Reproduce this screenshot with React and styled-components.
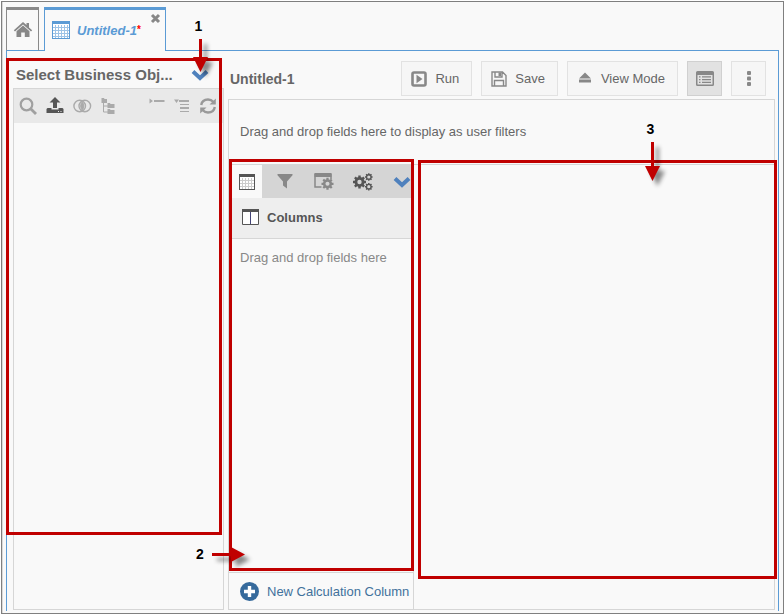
import React from "react";
import styled, { createGlobalStyle, css } from "styled-components";

const GlobalStyle = createGlobalStyle`
  * { box-sizing: border-box; }
  body {
    margin: 0;
    background: #fff;
    color: #666;
    font-family: "Liberation Sans", Arial, sans-serif;
    font-size: 13px;
  }
  button { font: inherit; color: inherit; cursor: pointer; }
`;

const RED = "#c00000";
const BLUE = "#5b9bd5";
const LINE = "#d6d6d6";

const Frame = styled.div`
  display: flex;
  flex-direction: column;
  min-height: calc(100vh - 1px);
  margin: 1px 0 0 1px;
  padding: 0 4px 2px 4px;
  border: 1px solid #7f7f7f;
  box-shadow: inset 1px 0 #d9d9d9;
  background: #f9f9f9;
`;

const TabBar = styled.nav`
  display: flex;
  align-items: stretch;
  height: 49px;
  padding-top: 5px;
`;

const TabSpacer = styled.div`
  flex: ${(p) => (p.$fill ? "1" : "0 0 5px")};
  border-bottom: 1px solid ${BLUE};
`;

const HomeTab = styled.button`
  display: flex;
  align-items: center;
  justify-content: center;
  width: 33px;
  padding: 0;
  border: 1px solid #8a8a8a;
  border-top: 3px solid #8a8a8a;
  border-bottom: 1px solid ${BLUE};
  background: transparent;
`;

const DocumentTab = styled.div`
  position: relative;
  display: flex;
  width: 122px;
  border: 1px solid ${BLUE};
  border-top-width: 3px;
  border-bottom: 0;
`;

const TabLabel = styled.button`
  display: flex;
  flex: 1;
  align-items: center;
  gap: 7px;
  padding: 0 0 1px 7px;
  border: 0;
  background: transparent;
  color: ${BLUE};
  font-weight: bold;
  font-style: italic;
  sup { color: #f00; font-size: 10px; font-style: normal; line-height: 0; vertical-align: 2px; }
`;

const CloseButton = styled.button`
  position: absolute;
  top: 3px;
  right: 4px;
  display: flex;
  padding: 0;
  border: 0;
  background: transparent;
`;

const Body = styled.main`
  display: flex;
  flex: 1;
  gap: 4px;
  padding: 0 3px 1px 6px;
  border: 1px solid ${BLUE};
  border-top: 0;
  border-bottom: 0;
`;

const Sidebar = styled.aside`
  position: relative;
  display: flex;
  flex-direction: column;
  flex: 0 0 211px;
`;

const SidebarHeader = styled.header`
  display: flex;
  align-items: center;
  gap: 12px;
  height: 37px;
  padding: 10px 15px 0 3px;
`;

const SidebarTitle = styled.h2`
  flex: 1;
  margin: 0;
  font-size: 15px;
  white-space: nowrap;
`;

const SidebarPanel = styled.section`
  flex: 1;
  border: 1px solid ${LINE};
`;

const IconRow = styled.div`
  display: flex;
  align-items: center;
  gap: 9px;
  height: 34px;
  padding: 0 6px 0 5px;
  background: #e9e9e9;
`;

const PlainButton = styled.button`
  display: flex;
  padding: 0;
  border: 0;
  background: transparent;
  margin-left: ${(p) => (p.$apart ? "auto" : "0")};
`;

const Workspace = styled.section`
  display: flex;
  flex: 1;
  flex-direction: column;
  min-width: 0;
`;

const Toolbar = styled.header`
  display: flex;
  align-items: center;
  gap: 9px;
  height: 48px;
  padding: 8px 9px 1px 2px;
`;

const ReportTitle = styled.h1`
  flex: 1;
  margin: 0;
  font-size: 14px;
`;

const ToolButton = styled.button`
  display: flex;
  align-items: center;
  gap: 8px;
  height: 35px;
  padding: 0 12px 0 9px;
  border: 1px solid #e2e2e2;
  background: #f6f6f6;
  white-space: nowrap;
  ${(p) => p.$square && css`
    justify-content: center;
    width: 35px;
    padding: 0;
  `}
  ${(p) => p.$pressed && css`
    border-color: #d0d0d0;
    background: #e2e2e2;
  `}
`;

const ReportArea = styled.div`
  display: flex;
  flex: 1;
  flex-direction: column;
  border: 1px solid ${LINE};
`;

const FilterZone = styled.div`
  display: flex;
  align-items: center;
  height: 65px;
  padding: 0 11px 2px;
  border-bottom: 1px solid ${LINE};
`;

const Split = styled.div`
  display: flex;
  flex: 1;
`;

const FieldsPanel = styled.section`
  position: relative;
  display: flex;
  flex-direction: column;
  flex: 0 0 185px;
  min-width: 0;
  border-right: 1px solid ${LINE};
`;

const FieldTabs = styled.div`
  display: flex;
  height: 33px;
  margin-left: 3px;
  overflow: hidden;
  background: #d5d5d5;
`;

const FieldTab = styled.button`
  display: flex;
  flex: 0 0 ${(p) => (p.$active ? "30px" : "39px")};
  align-items: center;
  justify-content: center;
  margin-right: ${(p) => (p.$active ? "3px" : "0")};
  padding: 0;
  border: 0;
  background: ${(p) => (p.$active ? "#f9f9f9" : "transparent")};
`;

const ColumnsHeader = styled.h3`
  display: flex;
  align-items: center;
  gap: 8px;
  height: 41px;
  margin: 0 0 0 3px;
  padding: 0 0 2px 10px;
  border-bottom: 1px solid ${LINE};
  background: #eee;
  color: #555;
  font-size: 13px;
`;

const ColumnsZone = styled.div`
  flex: 1;
  padding: 11px;
  color: #888;
`;

const NewColumn = styled.button`
  display: flex;
  align-items: center;
  gap: 8px;
  height: 37px;
  padding: 1px 0 0 11px;
  border: 0;
  border-top: 1px solid ${LINE};
  background: transparent;
  color: #41719c;
  white-space: nowrap;
`;

const Canvas = styled.section`
  position: relative;
  flex: 1;
`;

const Highlight = styled.div`
  position: absolute;
  inset: ${(p) => p.$inset};
  border: 3px solid ${RED};
  pointer-events: none;
`;

const Callout = styled.div`
  position: absolute;
  top: ${(p) => p.$top};
  left: ${(p) => p.$left};
  z-index: 2;
  display: flex;
  flex-direction: ${(p) => (p.$across ? "row" : "column")};
  align-items: center;
  gap: ${(p) => (p.$across ? "8px" : "5px")};
  color: #000;
  font-size: 14px;
  font-weight: bold;
  line-height: 16px;
  pointer-events: none;
  svg { overflow: visible; filter: drop-shadow(5px 5px 2px rgba(0, 0, 0, 0.45)); }
`;

const CalloutNumber = styled.span`
  padding-right: ${(p) => (p.$across ? "0" : "4px")};
`;

const Icon = ({ w = 18, h = w, box = `0 0 ${w} ${h}`, color = "#888", stroke, children }) => (
  <svg width={w} height={h} viewBox={box} fill={stroke ? "none" : color} stroke={stroke ? color : "none"} strokeWidth={stroke} aria-hidden="true">
    {children}
  </svg>
);

const HomeIcon = () => (
  <Icon w={20} h={18}>
    <path d="M10 1 0.8 9.2 2 10.4 10 3.4 18 10.4 19.2 9.2 16 6.4V2H13.5V4.1Z" />
    <path d="M10 4.6 3.5 10.3V16H8.2V11.6H11.8V16H16.5V10.3Z" />
  </Icon>
);

const GridIcon = ({ size = 18, color, cells, rule = 3 }) => {
  const stops = Array.from({ length: Math.floor((size - 3) / rule) }, (_, i) => (i + 1) * rule + 0.5);
  return (
    <Icon w={size}>
      <rect x="0.5" y="0.5" width={size - 1} height={size - 1} fill="#fff" />
      <path d={stops.map((s) => `M${s} 4V${size - 1}`).join("") + stops.filter((s) => s > 5).map((s) => `M1 ${s}H${size - 1}`).join("")} stroke={cells} />
      <rect x="0.5" y="0.5" width={size - 1} height={size - 1} fill="none" stroke={color} />
      <rect width={size} height="3" fill={color} />
    </Icon>
  );
};

const CloseIcon = () => (
  <Icon w={11} stroke="3"><path d="M2 2 9 9M9 2 2 9" /></Icon>
);

const ChevronIcon = () => (
  <Icon w={18} h={12} color="#4f81bd" stroke="4"><path d="M2 2.5 9 9 16 2.5" /></Icon>
);

const SearchIcon = () => (
  <Icon w={18} color="#a0a0a0" stroke="2.2"><circle cx="7.5" cy="7.5" r="5.8" /><path d="M11.7 11.7 17 17" strokeWidth="2.8" /></Icon>
);

const UploadIcon = () => (
  <Icon w={18} color="#555">
    <path d="M9 0 14.5 5.5H11V11H7V5.5H3.5Z" />
    <path fillRule="evenodd" d="M1.5 11H5.5V12.5H12.5V11H16.5L17.5 12V16H0.5V12ZM12 14V15H13V14ZM14.5 14V15H15.5V14Z" />
  </Icon>
);

const VennIcon = () => (
  <Icon w={19} h={14} color="#aaa" stroke="1.4">
    <circle cx="6.7" cy="7" r="5.8" /><circle cx="11.8" cy="7" r="5.8" />
    <path d="M9.2 2.8C7.2 5 7.2 9 9.2 11.2 11.3 9 11.3 5 9.2 2.8Z" fill="#aaa" strokeWidth="1" />
  </Icon>
);

const TreeIcon = () => (
  <Icon w={16} h={18} color="#aaa">
    <path d="M0.5 1H3L3.5 2H6V6H0.5ZM6.5 6H9L9.5 7H13.5V11H6.5ZM6.5 12H9L9.5 13H13.5V17H6.5Z" />
    <path d="M2.5 6V15H7M2.5 9H7" fill="none" stroke="#aaa" />
  </Icon>
);

const CollapseIcon = () => (
  <Icon w={16} h={16} color="#aaa"><path d="M0.5 0.5 4 3 0.5 5.5ZM5 2H15.5V4H5Z" /></Icon>
);

const ExpandIcon = () => (
  <Icon w={16} h={16} color="#aaa"><path d="M0 1.5H5L2.5 5ZM5 2H15V4H5ZM6 6H15V7H6ZM6 9H15V11H6ZM6 13H15V14H6Z" /></Icon>
);

const RefreshIcon = () => (
  <Icon w={18} h={18} color="#999" stroke="2.4">
    <path d="M2.2 8C2.8 4.5 5.7 2.5 9 2.5 11.2 2.5 13 3.4 14.5 5M15.8 10C15.2 13.5 12.3 15.5 9 15.5 6.8 15.5 5 14.6 3.5 13" />
    <path d="M16.8 1.5V7.5H10.5ZM1.2 16.5V10.5H7.5Z" fill="#999" stroke="none" />
  </Icon>
);

const RunIcon = () => (
  <Icon w={16} stroke="2.6"><rect x="1.5" y="1.5" width="13" height="13" rx="1.5" /><path d="M5.5 3.8 11.5 8 5.5 12.2Z" fill="#888" stroke="none" /></Icon>
);

const SaveIcon = () => (
  <Icon w={16} stroke="1.4"><path d="M1 1H11.5L15 4.5V15H1ZM4 1V6H11V1M3.5 15V9.5H12.5V15" /><path d="M7.5 1.5H10V5H7.5Z" fill="#888" stroke="none" /></Icon>
);

const EjectIcon = () => (
  <Icon w={16} h={13}><path d="M8 0.5 14 6.5H2ZM2 7.5H14V10.5H2Z" /></Icon>
);

const ListIcon = () => (
  <Icon w={18} h={15}>
    <path fillRule="evenodd" d="M1.5 0H16.5Q18 0 18 1.5V13.5Q18 15 16.5 15H1.5Q0 15 0 13.5V1.5Q0 0 1.5 0ZM1.5 4V13.5H16.5V4Z" />
    <path d="M3 5.8H4.5M6 5.8H15M3 8.6H4.5M6 8.6H15M3 11.4H4.5M6 11.4H15" stroke="#888" strokeWidth="1.3" />
  </Icon>
);

const MoreIcon = () => (
  <Icon w={6} h={16}><rect x="1" width="4" height="4" rx="1" /><rect x="1" y="5.5" width="4" height="4" rx="1" /><rect x="1" y="11" width="4" height="4" rx="1" /></Icon>
);

const FunnelIcon = () => (
  <Icon w={16} h={15}><path d="M0.5 0H15.5V1.2L10 7.5V14.5L6 11.5V7.5L0.5 1.2Z" /></Icon>
);

const teeth = (cx, cy, r, n) =>
  Array.from({ length: n }, (_, i) => {
    const a = (i * 2 * Math.PI) / n;
    return `M${cx} ${cy}L${(cx + r * Math.cos(a)).toFixed(2)} ${(cy + r * Math.sin(a)).toFixed(2)}`;
  }).join("");

const Gear = ({ cx, cy, r, color, hole, bore = 0.34 }) => (
  <g>
    <path d={teeth(cx, cy, r, 8)} stroke={color} strokeWidth={r * 0.38} />
    <circle cx={cx} cy={cy} r={r * 0.76} fill={color} />
    <circle cx={cx} cy={cy} r={r * bore} fill={hole} />
  </g>
);

const WindowGearIcon = () => (
  <Icon w={20} h={17}>
    <path d="M7.5 14H1V1.5H17V6" fill="none" stroke="#888" strokeWidth="1.5" />
    <path d="M0.5 0H17.5V4H0.5Z" />
    <Gear cx={13.5} cy={10.8} r={6} color="#888" hole="#d5d5d5" />
  </Icon>
);

const GearsIcon = () => (
  <Icon w={20} h={18}>
    <Gear cx={6.5} cy={9} r={6.5} color="#555" hole="#d5d5d5" />
    <Gear cx={15.8} cy={4} r={3.8} color="#555" hole="#d5d5d5" bore={0.42} />
    <Gear cx={15.8} cy={13.7} r={3.8} color="#555" hole="#d5d5d5" bore={0.42} />
  </Icon>
);

const ColumnsIcon = () => (
  <Icon w={17} h={16}>
    <path d="M0.5 1V15.5H16.5V1" fill="#fff" stroke="#555" /><path d="M0 0H17V3H0Z" fill="#555" /><path d="M8.5 3V15" stroke="#447" />
  </Icon>
);

const PlusIcon = () => (
  <Icon w={19}><circle cx="9.5" cy="9.5" r="9.5" fill="#366a9c" /><path d="M9.5 4V15M4 9.5H15" stroke="#fff" strokeWidth="3.4" /></Icon>
);

const ArrowDown = ({ length = 33 }) => (
  <Icon w={15} h={length} color={RED}><path d={`M6 0H9V${length - 15}H15L7.5 ${length}L0 ${length - 15}H6Z`} /></Icon>
);

const ArrowRight = () => (
  <Icon w={33} h={15} color={RED}><path d="M0 6H19V0L33 7.5 19 15V9H0Z" /></Icon>
);

export default function App() {
  return (
    <>
      <GlobalStyle />
      <Frame>
        <TabBar>
          <HomeTab aria-label="Home"><HomeIcon /></HomeTab>
          <TabSpacer />
          <DocumentTab>
            <TabLabel>
              <GridIcon color={BLUE} cells="#9dc3e6" />
              <span>Untitled-1<sup>*</sup></span>
            </TabLabel>
            <CloseButton aria-label="Close tab"><CloseIcon /></CloseButton>
          </DocumentTab>
          <TabSpacer $fill />
        </TabBar>
        <Body>
          <Sidebar>
            <SidebarHeader>
              <SidebarTitle>Select Business Obj...</SidebarTitle>
              <PlainButton aria-label="Choose business object"><ChevronIcon /></PlainButton>
            </SidebarHeader>
            <SidebarPanel>
              <IconRow>
                <PlainButton aria-label="Search"><SearchIcon /></PlainButton>
                <PlainButton aria-label="Upload"><UploadIcon /></PlainButton>
                <PlainButton aria-label="Join"><VennIcon /></PlainButton>
                <PlainButton aria-label="Hierarchy"><TreeIcon /></PlainButton>
                <PlainButton $apart aria-label="Collapse"><CollapseIcon /></PlainButton>
                <PlainButton aria-label="Expand"><ExpandIcon /></PlainButton>
                <PlainButton aria-label="Refresh"><RefreshIcon /></PlainButton>
              </IconRow>
            </SidebarPanel>
            <Highlight $inset="7px 2px 75px -7px" />
            <Callout $top="-33px" $left="180px">
              <CalloutNumber>1</CalloutNumber>
              <ArrowDown />
            </Callout>
          </Sidebar>
          <Workspace>
            <Toolbar>
              <ReportTitle>Untitled-1</ReportTitle>
              <ToolButton><RunIcon />Run</ToolButton>
              <ToolButton><SaveIcon />Save</ToolButton>
              <ToolButton><EjectIcon />View Mode</ToolButton>
              <ToolButton $square $pressed aria-label="Show panels"><ListIcon /></ToolButton>
              <ToolButton $square aria-label="More options"><MoreIcon /></ToolButton>
            </Toolbar>
            <ReportArea>
              <FilterZone>Drag and drop fields here to display as user filters</FilterZone>
              <Split>
                <FieldsPanel>
                  <FieldTabs>
                    <FieldTab $active aria-label="Table"><GridIcon size={16} color="#555" cells="#ccc" /></FieldTab>
                    <FieldTab aria-label="Filters"><FunnelIcon /></FieldTab>
                    <FieldTab aria-label="Display settings"><WindowGearIcon /></FieldTab>
                    <FieldTab aria-label="Settings"><GearsIcon /></FieldTab>
                    <FieldTab aria-label="More tabs"><ChevronIcon /></FieldTab>
                  </FieldTabs>
                  <ColumnsHeader><ColumnsIcon />Columns</ColumnsHeader>
                  <ColumnsZone>Drag and drop fields here</ColumnsZone>
                  <NewColumn><PlusIcon />New Calculation Column</NewColumn>
                  <Highlight $inset="-6px -1px 38px 0" />
                  <Callout $across $top="calc(100% - 63px)" $left="-33px">
                    <CalloutNumber $across>2</CalloutNumber>
                    <ArrowRight />
                  </Callout>
                </FieldsPanel>
                <Canvas>
                  <Highlight $inset="-5px -3px 30px 4px" />
                  <Callout $top="-44px" $left="calc(65% - 3px)">
                    <CalloutNumber>3</CalloutNumber>
                    <ArrowDown length={39} />
                  </Callout>
                </Canvas>
              </Split>
            </ReportArea>
          </Workspace>
        </Body>
      </Frame>
    </>
  );
}
